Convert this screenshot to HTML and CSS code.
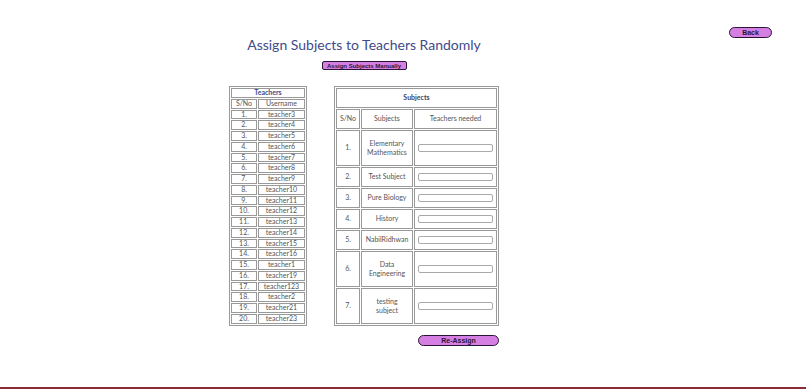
FILE: index.html
```html
<!DOCTYPE html>
<html lang="en">
<head>
  <meta charset="UTF-8">
  <meta name="viewport" content="width=device-width, initial-scale=1.0">
  <title>Assign Subjects Randomly</title>
  <link rel="stylesheet" href="styles.css">
</head>
<body>

<div class="page">
  <div class="layout">
    <main class="main-content">
      <h1 class="page-title">Assign Subjects to Teachers Randomly</h1>
      <button class="btn btn-manual" type="button">Assign Subjects Manually</button>

      <div class="tables">
        <table class="teachers-table">
          <tr><th colspan="2" class="table-head">Teachers</th></tr>
          <tr><td class="col-no">S/No</td><td>Username</td></tr>
          <tr><td>1.</td><td>teacher3</td></tr>
          <tr><td>2.</td><td>teacher4</td></tr>
          <tr><td>3.</td><td>teacher5</td></tr>
          <tr><td>4.</td><td>teacher6</td></tr>
          <tr><td>5.</td><td>teacher7</td></tr>
          <tr><td>6.</td><td>teacher8</td></tr>
          <tr><td>7.</td><td>teacher9</td></tr>
          <tr><td>8.</td><td>teacher10</td></tr>
          <tr><td>9.</td><td>teacher11</td></tr>
          <tr><td>10.</td><td>teacher12</td></tr>
          <tr><td>11.</td><td>teacher13</td></tr>
          <tr><td>12.</td><td>teacher14</td></tr>
          <tr><td>13.</td><td>teacher15</td></tr>
          <tr><td>14.</td><td>teacher16</td></tr>
          <tr><td>15.</td><td>teacher1</td></tr>
          <tr><td>16.</td><td>teacher19</td></tr>
          <tr><td>17.</td><td>teacher123</td></tr>
          <tr><td>18.</td><td>teacher2</td></tr>
          <tr><td>19.</td><td>teacher21</td></tr>
          <tr><td>20.</td><td>teacher23</td></tr>
        </table>

        <form class="assign-form" onsubmit="return false">
          <table class="subjects-table">
            <tr class="row-head"><th colspan="3" class="table-head">Subjects</th></tr>
            <tr class="row-head">
              <td class="col-no">S/No</td>
              <td class="col-subject">Subjects</td>
              <td>Teachers needed</td>
            </tr>
            <tr class="row-tall"><td>1.</td><td>Elementary<br>Mathematics</td><td><input type="text" class="needed-input"></td></tr>
            <tr class="row-single"><td>2.</td><td>Test Subject</td><td><input type="text" class="needed-input"></td></tr>
            <tr class="row-single"><td>3.</td><td>Pure Biology</td><td><input type="text" class="needed-input"></td></tr>
            <tr class="row-single"><td>4.</td><td>History</td><td><input type="text" class="needed-input"></td></tr>
            <tr class="row-single"><td>5.</td><td>NabilRidhwan</td><td><input type="text" class="needed-input"></td></tr>
            <tr class="row-tall"><td>6.</td><td>Data<br>Engineering</td><td><input type="text" class="needed-input"></td></tr>
            <tr class="row-tall"><td>7.</td><td>testing<br>subject</td><td><input type="text" class="needed-input"></td></tr>
          </table>
          <div class="form-actions">
            <button class="btn btn-pill btn-reassign" type="submit">Re-Assign</button>
          </div>
        </form>
      </div>
    </main>

    <aside class="side">
      <button class="btn btn-pill btn-back" type="button">Back</button>
    </aside>
  </div>

  <footer class="footer"></footer>
</div>

</body>
</html>
```

FILE: styles.css
```css
body {
  margin: 0;
  background-color: #fff;
  font-family: Lato, "Noto Sans", sans-serif;
}

.page {
  display: flex;
  flex-direction: column;
  min-height: 100vh;
}

.layout {
  display: flex;
  flex: 1;
}

.main-content {
  width: 728px;
  display: flex;
  flex-direction: column;
  align-items: center;
}

.page-title {
  margin: 37px 0 0;
  font: 400 14px/16px Lato, "Noto Sans", sans-serif;
  color: #3f4b8a;
}

/* buttons */
.btn {
  font: 700 7px/7px "Liberation Sans", Arial, sans-serif;
  color: #2b1538;
  background-color: #d67fe2;
  border: 1px solid #2b1538;
  padding: 0;
  white-space: nowrap;
  cursor: pointer;
}

.btn-manual {
  margin-top: 8px;
  width: 85px;
  height: 9px;
  font-size: 6px;
  line-height: 6px;
  border-radius: 2px;
}

.btn-pill {
  height: 11px;
  border-radius: 6px;
}

.btn-reassign {
  width: 81px;
}

.btn-back {
  margin: 27px 0 0 1px;
  width: 43px;
}

/* tables */
.tables {
  display: flex;
  align-items: flex-start;
  gap: 27px;
  margin-top: 16px;
}

table {
  border: 1px solid #999;
  border-collapse: separate;
  border-spacing: 1px;
  font-size: 7px;
  color: #555;
  text-align: center;
}

th,
td {
  border: 1px solid #999;
  padding: 0;
}

.table-head {
  font-weight: 700;
  color: #3b4a8b;
}

.teachers-table {
  width: 78px;
  line-height: 7.75px;
}

.teachers-table .col-no {
  width: 24px;
}

.subjects-table {
  width: 165px;
  line-height: 9.5px;
}

.subjects-table .table-head {
  color: #3c3f5e;
}

.subjects-table .col-no {
  width: 22px;
}

.subjects-table .col-subject {
  width: 50px;
}

.row-head {
  height: 20px;
}

.row-single {
  height: 20px;
}

.row-tall {
  height: 36px;
}

.needed-input {
  display: block;
  box-sizing: border-box;
  width: 75px;
  height: 8px;
  margin: 0 auto;
  padding: 0;
  border: 1px solid #aaa;
  border-radius: 2px;
  background: #fff;
}

.form-actions {
  display: flex;
  justify-content: flex-end;
  margin-top: 9px;
}

.side {
  flex: 1;
}

.footer {
  height: 2px;
  margin-bottom: 1px;
  background-color: #8c2b36;
}
```
